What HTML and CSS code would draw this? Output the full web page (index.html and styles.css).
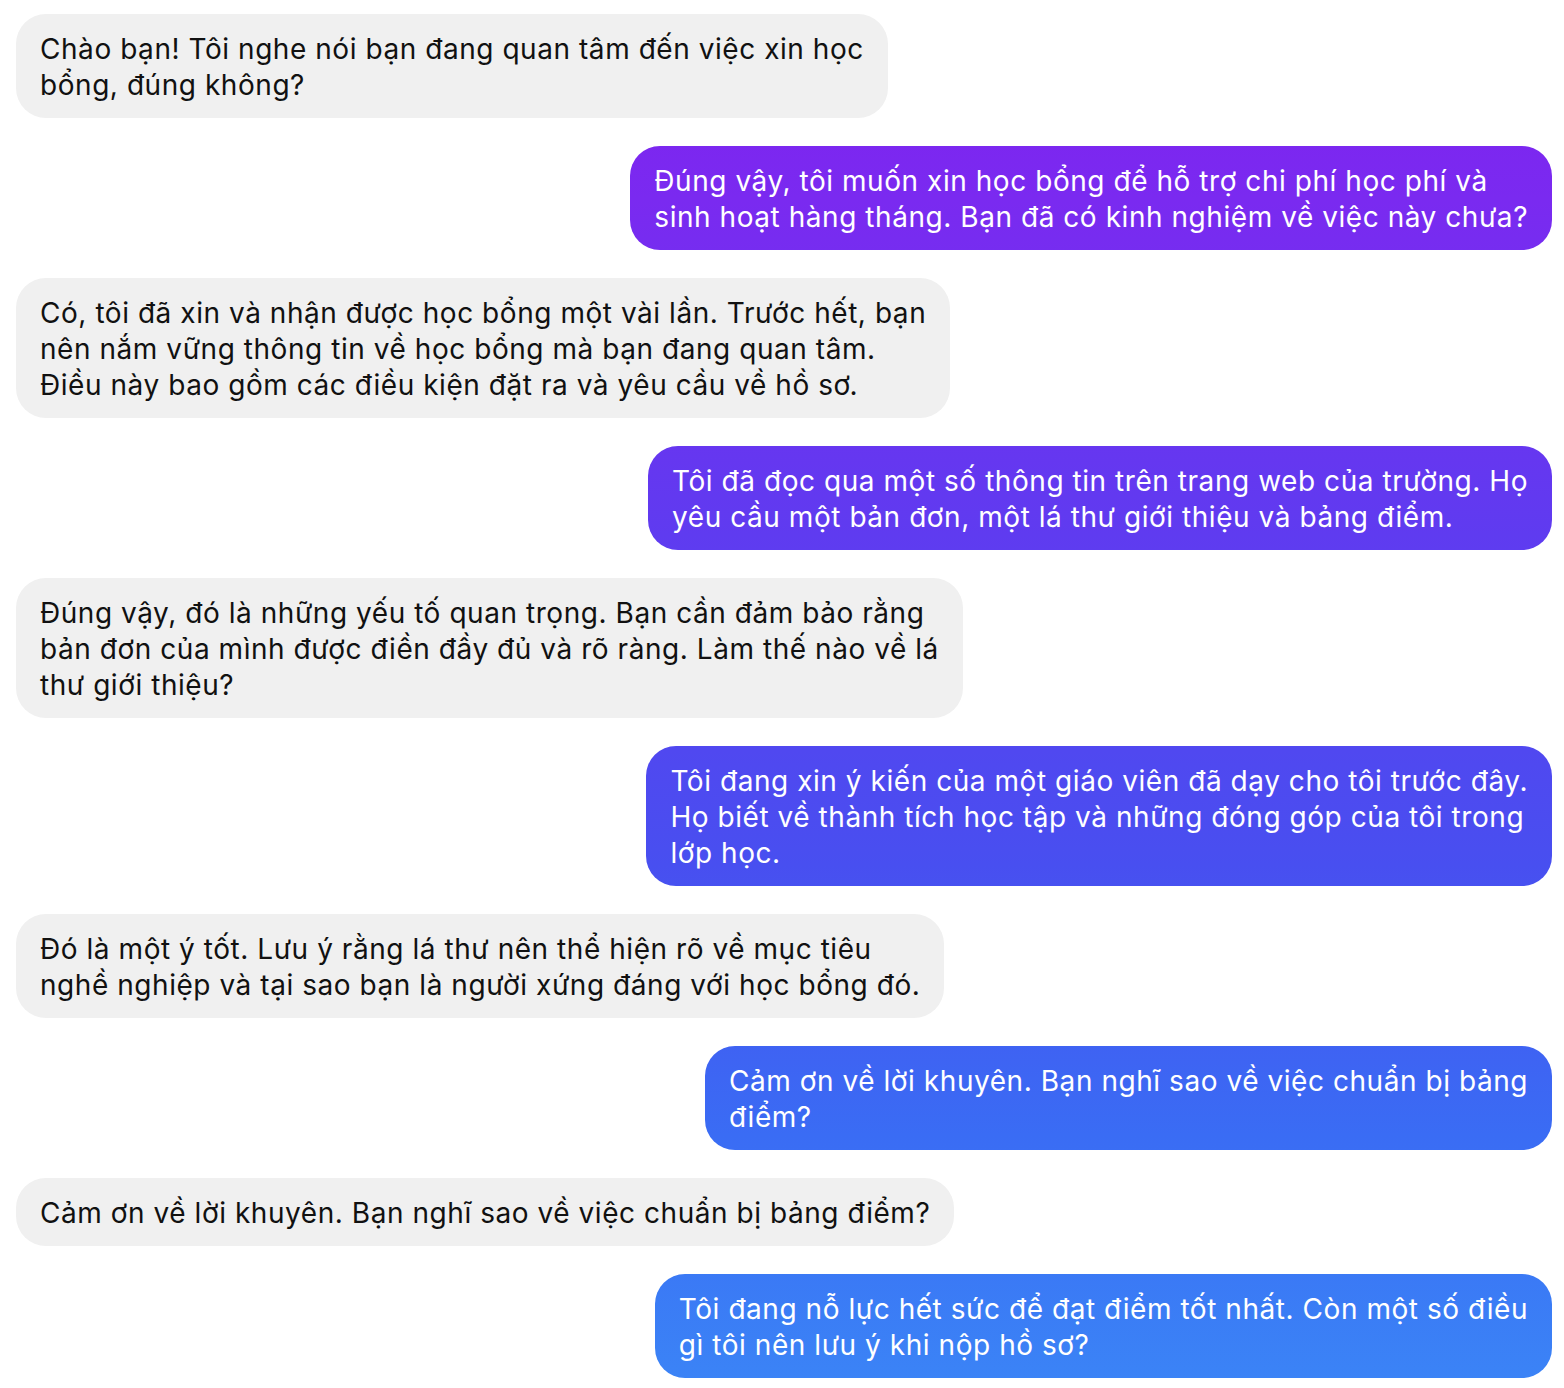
FILE: index.html
```html
<!DOCTYPE html>
<html lang="vi">
<head>
<meta charset="utf-8">
<title>Chat</title>
<link rel="stylesheet" href="styles.css">
</head>
<body>
<main class="chat">
  <div class="msg msg-them">Chào bạn! Tôi nghe nói bạn đang quan tâm đến việc xin học<br>bổng, đúng không?</div>
  <div class="msg msg-me">Đúng vậy, tôi muốn xin học bổng để hỗ trợ chi phí học phí và<br>sinh hoạt hàng tháng. Bạn đã có kinh nghiệm về việc này chưa?</div>
  <div class="msg msg-them">Có, tôi đã xin và nhận được học bổng một vài lần. Trước hết, bạn<br>nên nắm vững thông tin về học bổng mà bạn đang quan tâm.<br>Điều này bao gồm các điều kiện đặt ra và yêu cầu về hồ sơ.</div>
  <div class="msg msg-me">Tôi đã đọc qua một số thông tin trên trang web của trường. Họ<br>yêu cầu một bản đơn, một lá thư giới thiệu và bảng điểm.</div>
  <div class="msg msg-them">Đúng vậy, đó là những yếu tố quan trọng. Bạn cần đảm bảo rằng<br>bản đơn của mình được điền đầy đủ và rõ ràng. Làm thế nào về lá<br>thư giới thiệu?</div>
  <div class="msg msg-me">Tôi đang xin ý kiến của một giáo viên đã dạy cho tôi trước đây.<br>Họ biết về thành tích học tập và những đóng góp của tôi trong<br>lớp học.</div>
  <div class="msg msg-them">Đó là một ý tốt. Lưu ý rằng lá thư nên thể hiện rõ về mục tiêu<br>nghề nghiệp và tại sao bạn là người xứng đáng với học bổng đó.</div>
  <div class="msg msg-me">Cảm ơn về lời khuyên. Bạn nghĩ sao về việc chuẩn bị bảng<br>điểm?</div>
  <div class="msg msg-them">Cảm ơn về lời khuyên. Bạn nghĩ sao về việc chuẩn bị bảng điểm?</div>
  <div class="msg msg-me">Tôi đang nỗ lực hết sức để đạt điểm tốt nhất. Còn một số điều<br>gì tôi nên lưu ý khi nộp hồ sơ?</div>
</main>
</body>
</html>
```
FILE: styles.css
```css
html, body {
  margin: 0;
  padding: 0;
  background: #ffffff;
}

body {
  font-family: Inter, "Noto Sans", "DejaVu Sans", sans-serif;
  font-size: 28px;
  line-height: 36px;
  letter-spacing: 0.55px;
  color: #111111;
}

.chat {
  display: flex;
  flex-direction: column;
  gap: 28px;
  padding: 14px 12px 10px 16px;
}

.msg {
  width: fit-content;
  max-width: 64%;
  padding: 17px 24px 15px;
  border-radius: 30px;
  white-space: nowrap;
}

.msg-them {
  align-self: flex-start;
  background: #f0f0f0;
  color: #111111;
}

.msg-me {
  align-self: flex-end;
  color: #ffffff;
  background-image: linear-gradient(to bottom,
    #8020ef 0px,
    #7a2af0 200px,
    #5f3bf0 535px,
    #484ff0 865px,
    #3a6cf4 1135px,
    #3b84f6 1388px);
  background-attachment: fixed;
}
```
